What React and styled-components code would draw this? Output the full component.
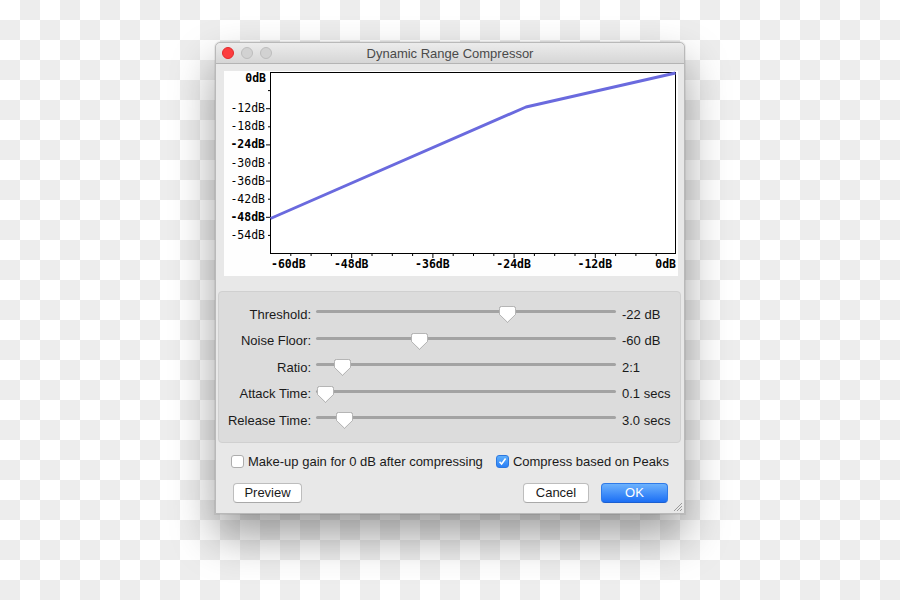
import React from "react";
import styled, { createGlobalStyle, css } from "styled-components";

const GlobalStyle = createGlobalStyle`
  html, body {
    margin: 0;
    height: 100%;
  }
  body {
    background: repeating-conic-gradient(#ededed 0 25%, #ffffff 0 50%) 0 0 / 40px 40px;
    font-family: "Liberation Sans", Arial, sans-serif;
    font-size: 13px;
    color: #1a1a1a;
  }
`;

const Stage = styled.div`
  display: flex;
  justify-content: center;
  padding-top: 42px;
`;

const Window = styled.div`
  position: relative;
  width: 470px;
  height: 472px;
  box-sizing: border-box;
  display: flex;
  flex-direction: column;
  background: #e8e8e8;
  border: 1px solid #b9b9b9;
  border-radius: 5px 5px 0 0;
  box-shadow: 0 22px 44px rgba(0, 0, 0, 0.38), 0 0 0 1px rgba(0, 0, 0, 0.06);
`;

const TitleBar = styled.div`
  height: 20px;
  display: grid;
  grid-template-columns: 1fr auto 1fr;
  align-items: center;
  padding: 0 6px;
  background: linear-gradient(#ececec, #d6d6d6);
  border-bottom: 1px solid #b4b4b4;
  border-radius: 5px 5px 0 0;
`;

const Lights = styled.div`
  display: flex;
  gap: 7px;
`;

const Light = styled.span`
  width: 12px;
  height: 12px;
  border-radius: 50%;
  box-sizing: border-box;
  background: #d2d2d2;
  border: 1px solid #bdbdbd;
  ${(p) =>
    p.close &&
    css`
      background: #fc3d3f;
      border-color: #e22a2c;
    `}
`;

const Title = styled.div`
  color: #4a4a4a;
  font-size: 13px;
`;

const Body = styled.div`
  display: flex;
  flex-direction: column;
  padding: 7px 0 0;
`;

const GraphPanel = styled.div`
  margin: 0 0 0 8px;
  width: 454px;
  height: 205px;
  background: #fefefe;
`;

const SliderGroup = styled.div`
  margin: 15px 0 0 2px;
  width: 463px;
  box-sizing: border-box;
  padding: 9px 0 8px;
  background: #dcdcdc;
  border: 1px solid #d0d0d0;
  border-radius: 4px;
`;

const SliderRow = styled.div`
  display: grid;
  grid-template-columns: 92px 300px 1fr;
  column-gap: 5px;
  align-items: center;
  height: 26.5px;
`;

const Label = styled.div`
  text-align: right;
`;

const Value = styled.div`
  padding-left: 1px;
`;

const Track = styled.div`
  position: relative;
  height: 3px;
  margin-top: -5px;
  background: #a3a3a3;
  border-radius: 2px;
`;

const Thumb = styled.svg`
  position: absolute;
  top: -4px;
  width: 17px;
  height: 17px;
  margin-left: -8.5px;
  filter: drop-shadow(0 0.5px 0.5px rgba(0, 0, 0, 0.25));
`;

const OptionRow = styled.div`
  display: flex;
  justify-content: space-between;
  align-items: center;
  height: 20px;
  margin: 9px 15px 0 15px;
`;

const Option = styled.label`
  display: flex;
  align-items: center;
  gap: 4px;
`;

const Box = styled.span`
  width: 13px;
  height: 13px;
  box-sizing: border-box;
  border-radius: 3px;
  border: 1px solid #adadad;
  background: #ffffff;
  display: flex;
  align-items: center;
  justify-content: center;
  ${(p) =>
    p.checked &&
    css`
      background: linear-gradient(#5eaffc, #2a7ff6);
      border-color: #2c78e0;
    `}
`;

const ButtonRow = styled.div`
  display: flex;
  align-items: center;
  gap: 12px;
  margin: 11px 16px 0 17px;
`;

const Spacer = styled.div`
  flex: 1;
`;

const Button = styled.button`
  height: 20px;
  width: ${(p) => p.w}px;
  padding: 0;
  font-family: "Liberation Sans", Arial, sans-serif;
  font-size: 13px;
  color: #1a1a1a;
  background: #ffffff;
  border: 1px solid #bdbdbd;
  border-bottom-color: #a9a9a9;
  border-radius: 4px;
  ${(p) =>
    p.primary &&
    css`
      color: #ffffff;
      background: linear-gradient(#6db2fd, #1c6ff5);
      border-color: #2f7ae8;
      border-bottom-color: #1b5fd0;
    `}
`;

const Grip = styled.svg`
  position: absolute;
  right: 1px;
  bottom: 1px;
  width: 11px;
  height: 11px;
`;

const sliders = [
  { label: "Threshold:", value: "-22 dB", pos: 191 },
  { label: "Noise Floor:", value: "-60 dB", pos: 103 },
  { label: "Ratio:", value: "2:1", pos: 26 },
  { label: "Attack Time:", value: "0.1 secs", pos: 9 },
  { label: "Release Time:", value: "3.0 secs", pos: 28 },
];

// plot area inside the graph panel
const PX0 = 46;
const PX1 = 452;
const PY0 = 1;
const PY1 = 182;
const xOf = (db) => PX0 + ((db + 60) / 60) * (PX1 - PX0);
const yOf = (db) => PY0 + (-db / 60) * (PY1 - PY0);

function Graph() {
  const yLabels = [-12, -18, -24, -30, -36, -42, -48, -54];
  const yTicks = [];
  for (let d = -6; d >= -54; d -= 6) yTicks.push(d);
  const xTicks = [];
  for (let d = -57; d <= -3; d += 3) xTicks.push(d);
  const xLabels = [-48, -36, -24, -12];
  const bold = (d) => d === -24 || d === -48;

  return (
    <svg width="454" height="205" viewBox="0 0 454 205">
      <g fontFamily="'DejaVu Sans Mono', monospace" fontSize="11.5" fill="#000">
        <text x="42" y="11" textAnchor="end" fontWeight="bold">0dB</text>
        {yLabels.map((d) => (
          <text
            key={d}
            x="41"
            y={yOf(d) + 4}
            textAnchor="end"
            fontWeight={bold(d) ? "bold" : "normal"}
          >
            {`-${-d}dB`}
          </text>
        ))}
        <text x="47" y="197" fontWeight="bold">-60dB</text>
        {xLabels.map((d) => (
          <text key={d} x={xOf(d)} y="197" textAnchor="middle" fontWeight="bold">
            {`-${-d}dB`}
          </text>
        ))}
        <text x="452" y="197" textAnchor="end" fontWeight="bold">0dB</text>
      </g>
      <g stroke="#000" strokeWidth="1">
        {yTicks.map((d) => (
          <line key={d} x1={PX0 - (d % 12 === 0 ? 4 : 2)} x2={PX0} y1={yOf(d) + 0.5} y2={yOf(d) + 0.5} />
        ))}
        {xTicks.map((d) => (
          <line key={d} x1={xOf(d) + 0.5} x2={xOf(d) + 0.5} y1={PY1} y2={PY1 + (d % 12 === 0 ? 5 : 3)} />
        ))}
      </g>
      <rect x={PX0 + 0.5} y={PY0 + 0.5} width={PX1 - PX0 - 1} height={PY1 - PY0} fill="#fff" stroke="#000" />
      <polyline
        points="46.5,147.5 302,36 451.5,2"
        fill="none"
        stroke="#6a6ade"
        strokeWidth="3"
        strokeLinejoin="round"
      />
    </svg>
  );
}

function Slider({ pos }) {
  return (
    <Track>
      <Thumb viewBox="0 0 17 17" style={{ left: pos }}>
        <path
          d="M2.5 0.5 H14.5 Q16.5 0.5 16.5 2.5 V8.5 L8.5 16.3 L0.5 8.5 V2.5 Q0.5 0.5 2.5 0.5 Z"
          fill="#ffffff"
          stroke="#b5b5b5"
        />
      </Thumb>
    </Track>
  );
}

export default function App() {
  return (
    <>
      <GlobalStyle />
      <Stage>
        <Window>
          <TitleBar>
            <Lights>
              <Light close />
              <Light />
              <Light />
            </Lights>
            <Title>Dynamic Range Compressor</Title>
            <div />
          </TitleBar>
          <Body>
            <GraphPanel>
              <Graph />
            </GraphPanel>
            <SliderGroup>
              {sliders.map((s) => (
                <SliderRow key={s.label}>
                  <Label>{s.label}</Label>
                  <Slider pos={s.pos} />
                  <Value>{s.value}</Value>
                </SliderRow>
              ))}
            </SliderGroup>
            <OptionRow>
              <Option>
                <Box />
                Make-up gain for 0 dB after compressing
              </Option>
              <Option>
                <Box checked>
                  <svg width="9" height="9" viewBox="0 0 9 9">
                    <path d="M1.5 4.8 L3.6 7 L7.6 1.5" fill="none" stroke="#fff" strokeWidth="1.6" />
                  </svg>
                </Box>
                Compress based on Peaks
              </Option>
            </OptionRow>
            <ButtonRow>
              <Button w={69}>Preview</Button>
              <Spacer />
              <Button w={66}>Cancel</Button>
              <Button w={67} primary>OK</Button>
            </ButtonRow>
          </Body>
          <Grip viewBox="0 0 11 11">
            <g stroke="#9a9a9a" strokeWidth="1">
              <line x1="10" y1="2" x2="2" y2="10" />
              <line x1="10" y1="5" x2="5" y2="10" />
              <line x1="10" y1="8" x2="8" y2="10" />
            </g>
          </Grip>
        </Window>
      </Stage>
    </>
  );
}
